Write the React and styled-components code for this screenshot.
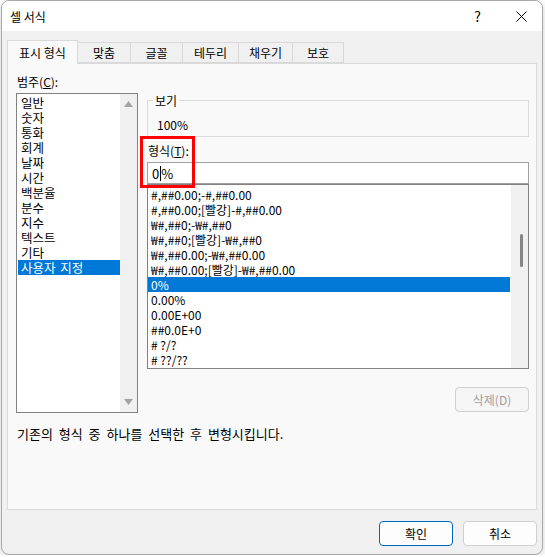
import React from "react";
import styled, { createGlobalStyle } from "styled-components";

const GlobalStyle = createGlobalStyle`
  html, body {
    margin: 0;
    padding: 0;
    background: #ffffff;
  }
  body {
    font-family: "Noto Sans CJK KR", "Noto Sans", sans-serif;
    font-size: 12px;
    color: #000000;
  }
`;

// Dialog window frame
const Window = styled.div`
  box-sizing: border-box;
  margin-left: 1px;
  width: 542px;
  height: 555px;
  border: 1px solid #a8a8a8;
  border-radius: 8px;
  background: #f0f0f0;
  overflow: hidden;
  display: flex;
  flex-direction: column;
  box-shadow: 0 2px 8px rgba(0, 0, 0, 0.18);
`;

const TitleBar = styled.div`
  height: 30px;
  background: #ffffff;
  display: flex;
  align-items: center;
  padding-left: 8px;
`;

const Title = styled.div`
  flex: 1;
  font-size: 12px;
  line-height: 15px;
`;

const TitleButton = styled.div`
  width: ${(p) => p.$w}px;
  height: 30px;
  display: flex;
  align-items: center;
  justify-content: center;
  font-size: 14px;
`;

const Body = styled.div`
  flex: 1;
  display: flex;
  flex-direction: column;
  padding: 9px 5px 0 5px;
`;

const TabStrip = styled.div`
  display: flex;
  align-items: flex-end;
  height: 23px;
  position: relative;
  z-index: 1;
`;

const Tab = styled.div`
  box-sizing: border-box;
  width: ${(p) => p.$w}px;
  height: ${(p) => (p.$active ? 24 : 21)}px;
  margin-bottom: ${(p) => (p.$active ? -1 : 0)}px;
  margin-left: ${(p) => (p.$first ? 0 : -1)}px;
  border: 1px solid #d9d9d9;
  border-bottom: ${(p) => (p.$active ? "none" : "1px solid #d9d9d9")};
  background: ${(p) => (p.$active ? "#f9f9f9" : "#f0f0f0")};
  display: flex;
  align-items: center;
  justify-content: center;
  line-height: 15px;
  padding-bottom: ${(p) => (p.$active ? 1 : 0)}px;
`;

const Panel = styled.div`
  box-sizing: border-box;
  height: 447px;
  border: 1px solid #dadada;
  background: #f9f9f9;
  padding: 10px 7px 0 8px;
  display: flex;
  flex-direction: column;
`;

const Columns = styled.div`
  display: grid;
  grid-template-columns: 122px 382px;
  column-gap: 9px;
`;

const Column = styled.div`
  display: flex;
  flex-direction: column;
`;

const Label = styled.div`
  line-height: 15px;
  height: 15px;
  padding-left: ${(p) => p.$indent || 0}px;
  margin-top: ${(p) => p.$top || 0}px;
`;

const CategoryBox = styled.div`
  box-sizing: border-box;
  margin-top: 4px;
  height: 320px;
  border: 1px solid #828282;
  background: #ffffff;
  display: flex;
`;

const Items = styled.div`
  flex: 1;
  padding: ${(p) => p.$pad || "1px 0 0 1px"};
  display: flex;
  flex-direction: column;
`;

const Item = styled.div`
  height: 15px;
  line-height: 15px;
  padding-left: 3px;
  white-space: nowrap;
  font-size: ${(p) => p.$size || 12}px;
  word-spacing: ${(p) => p.$spacing || 0}px;
  background: ${(p) => (p.$selected ? "#0078d7" : "transparent")};
  color: ${(p) => (p.$selected ? "#ffffff" : "#000000")};
`;

const ScrollTrack = styled.div`
  width: 17px;
  background: #f0f0f0;
  display: flex;
  flex-direction: column;
  justify-content: ${(p) => (p.$arrows ? "space-between" : "flex-start")};
  align-items: center;
  padding: ${(p) => (p.$arrows ? "7px 0 7px" : "0")};
  box-sizing: border-box;
`;

const Thumb = styled.div`
  width: 3px;
  height: 33px;
  margin-top: 49px;
  margin-left: 4px;
  border-radius: 2px;
  background: #858585;
`;

const GroupBox = styled.div`
  box-sizing: border-box;
  position: relative;
  margin-top: 26px;
  height: 37px;
  border: 1px solid #dcdcdc;
  padding: 16px 0 0 9px;
  line-height: 15px;
`;

const Legend = styled.span`
  position: absolute;
  top: -8px;
  left: 5px;
  padding: 0 2px;
  background: #f9f9f9;
  line-height: 15px;
`;

const FieldArea = styled.div`
  position: relative;
  display: flex;
  flex-direction: column;
`;

const Input = styled.div`
  box-sizing: border-box;
  margin-top: 4px;
  height: 22px;
  border: 1px solid #a0a0a0;
  background: #ffffff;
  display: flex;
  align-items: center;
  padding-left: 4px;
  font-size: 13px;
`;

const Caret = styled.span`
  display: inline-block;
  width: 1px;
  height: 15px;
  background: #000000;
  margin: 0 0 0 1px;
`;

const FormatBox = styled.div`
  box-sizing: border-box;
  height: 185px;
  border: 1px solid #828282;
  background: #ffffff;
  display: flex;
`;

const Highlight = styled.div`
  position: absolute;
  left: -7px;
  top: -1px;
  width: 55px;
  height: 52px;
  box-sizing: border-box;
  border: 3px solid #ff0000;
  pointer-events: none;
`;

const ButtonRow = styled.div`
  display: flex;
  justify-content: flex-end;
  gap: 10px;
  margin-top: ${(p) => p.$top || 0}px;
`;

const Button = styled.div`
  box-sizing: border-box;
  width: 74px;
  height: 25px;
  border-radius: 4px;
  border: 1px solid ${(p) => (p.$primary ? "#0067c0" : "#d0d0d0")};
  background: ${(p) => (p.$disabled ? "#f5f5f5" : "#fdfdfd")};
  color: ${(p) => (p.$disabled ? "#a0a0a0" : "#000000")};
  display: flex;
  align-items: center;
  justify-content: center;
  line-height: 15px;
`;

const Description = styled.div`
  margin-top: 13px;
  line-height: 15px;
  padding-left: 1px;
  font-size: 13px;
  word-spacing: 3px;
`;

const Arrow = ({ down }) => (
  <svg width="9" height="6" viewBox="0 0 9 6">
    <path d={down ? "M0 0 L9 0 L4.5 6 Z" : "M0 6 L9 6 L4.5 0 Z"} fill="#a3a3a3" />
  </svg>
);

const categories = [
  "일반", "숫자", "통화", "회계", "날짜", "시간",
  "백분율", "분수", "지수", "텍스트", "기타", "사용자 지정",
];

const formats = [
  "#,##0.00;-#,##0.00",
  "#,##0.00;[빨강]-#,##0.00",
  "₩#,##0;-₩#,##0",
  "₩#,##0;[빨강]-₩#,##0",
  "₩#,##0.00;-₩#,##0.00",
  "₩#,##0.00;[빨강]-₩#,##0.00",
  "0%",
  "0.00%",
  "0.00E+00",
  "##0.0E+0",
  "# ?/?",
  "# ??/??",
];

const tabs = [
  ["표시 형식", 71],
  ["맞춤", 54],
  ["글꼴", 53],
  ["테두리", 57],
  ["채우기", 55],
  ["보호", 52],
];

export default function App() {
  return (
    <>
      <GlobalStyle />
      <Window>
        <TitleBar>
          <Title>셀 서식</Title>
          <TitleButton $w={45}>?</TitleButton>
          <TitleButton $w={42}>
            <svg width="11" height="11" viewBox="0 0 11 11">
              <path d="M0.5 0.5 L10.5 10.5 M10.5 0.5 L0.5 10.5" stroke="#000" strokeWidth="1" />
            </svg>
          </TitleButton>
        </TitleBar>
        <Body>
          <TabStrip>
            {tabs.map(([name, w], i) => (
              <Tab key={name} $w={w} $first={i === 0} $active={i === 0}>
                {name}
              </Tab>
            ))}
          </TabStrip>
          <Panel>
            <Columns>
              <Column>
                <Label $indent={1}>
                  범주(<u>C</u>):
                </Label>
                <CategoryBox>
                  <Items>
                    {categories.map((c) => (
                      <Item key={c} $size={12.5} $spacing={2} $selected={c === "사용자 지정"}>
                        {c}
                      </Item>
                    ))}
                  </Items>
                  <ScrollTrack $arrows>
                    <Arrow />
                    <Arrow down />
                  </ScrollTrack>
                </CategoryBox>
              </Column>
              <Column>
                <GroupBox>
                  <Legend>보기</Legend>
                  100%
                </GroupBox>
                <FieldArea>
                  <Label $indent={1} $top={6}>
                    형식(<u>T</u>):
                  </Label>
                  <Input>
                    0<Caret />%
                  </Input>
                  <Highlight />
                </FieldArea>
                <FormatBox>
                  <Items $pad="2px 1px 0 0">
                    {formats.map((f) => (
                      <Item key={f} $selected={f === "0%"}>
                        {f}
                      </Item>
                    ))}
                  </Items>
                  <ScrollTrack>
                    <Thumb />
                  </ScrollTrack>
                </FormatBox>
                <ButtonRow $top={18}>
                  <Button $disabled>삭제(D)</Button>
                </ButtonRow>
              </Column>
            </Columns>
            <Description>기존의 형식 중 하나를 선택한 후 변형시킵니다.</Description>
          </Panel>
          <ButtonRow $top={11}>
            <Button $primary>확인</Button>
            <Button>취소</Button>
          </ButtonRow>
        </Body>
      </Window>
    </>
  );
}
